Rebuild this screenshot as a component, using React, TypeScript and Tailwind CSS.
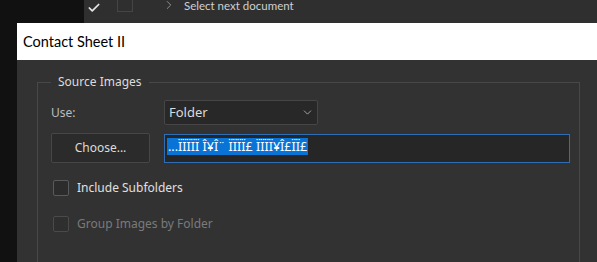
import { ChevronDown, Check, ChevronRight } from "lucide-react";

const font = { fontFamily: '"Noto Sans", "Open Sans", sans-serif' };
const narrow = { fontFamily: 'Lato, "Noto Sans", sans-serif' };

export default function App() {
  return (
    <div className="w-[597px] h-[262px] overflow-hidden bg-[#111111]" style={font}>
      {/* Actions panel behind the dialog */}
      <div className="flex h-[23px]">
        <div className="w-[84px] bg-[#111111]" />
        <div className="flex flex-1 items-start bg-[#2f2f2f]">
          <Check className="ml-[3px] mt-[1px] h-[14px] w-[14px] text-[#e6e6e6]" strokeWidth={3} />
          <div className="ml-[16px] -mt-[1px] h-[13px] w-[16px] border border-[#454545]" />
          <ChevronRight className="ml-[29px] -mt-[2px] h-[14px] w-[14px] text-[#9a9a9a]" strokeWidth={1.5} />
          <span className="ml-[8px] text-[11.5px] leading-[11px] text-[#d0d0d0]" style={narrow}>
            Select next document
          </span>
        </div>
      </div>

      <div className="flex">
        <div className="w-[17px]" />
        <div className="flex-1">
          {/* Title bar */}
          <div className="flex h-[37px] items-center bg-white pl-[6px] text-[14.5px] text-black" style={narrow}>
            Contact Sheet II
          </div>

          {/* Dialog body */}
          <div className="h-[202px] bg-[#323232] pl-[20px] pr-[17px] pt-[13px]">
            <fieldset className="h-[200px] border border-[#484848] pl-[13px] pr-[9px] pt-[9px]">
              <legend className="px-[7px] text-[12px] leading-[18px] text-[#dcdcdc]">
                Source Images
              </legend>

              <div className="flex items-center">
                <span className="w-[113px] text-[12px] text-[#bdbdbd]">Use:</span>
                <div className="flex h-[25px] w-[154px] items-center justify-between rounded-[2px] border border-[#464646] bg-[#282828] pl-[4px] pr-[3px] text-[13px] text-[#dcdcdc]">
                  Folder
                  <ChevronDown className="h-[13px] w-[13px] text-[#bdbdbd]" strokeWidth={1.5} />
                </div>
              </div>

              <div className="mt-[8px] flex items-center">
                <button className="flex h-[30px] w-[99px] items-center justify-center rounded-[2px] border border-[#474747] bg-[#2b2b2b] text-[12px] text-[#dcdcdc]">
                  Choose...
                </button>
                <div className="ml-[14px] flex h-[29px] flex-1 items-start border border-[#2f6db5] bg-[#262626] pl-[2px] pt-[3px]">
                  <span className="bg-[#0a74d6] px-[1px] text-[12.5px] leading-[17px] text-white">
                    ...ÏÏÏÏÏ Î¥Î¨ ÏÏÏÏ£ ÏÏÏÏ¥Î£ÏÏ£
                  </span>
                </div>
              </div>

              <label className="mt-[16px] flex items-center">
                <span className="ml-[2px] h-[16px] w-[16px] rounded-[2px] border border-[#5a5a5a] bg-[#2c2c2c]" />
                <span className="ml-[8px] text-[12px] text-[#e0e0e0]">Include Subfolders</span>
              </label>

              <label className="mt-[18px] flex items-center">
                <span className="ml-[2px] h-[16px] w-[16px] rounded-[2px] border border-[#4a4a4a] bg-[#2f2f2f]" />
                <span className="ml-[8px] text-[12px] text-[#7a7a7a]">Group Images by Folder</span>
              </label>
            </fieldset>
          </div>
        </div>
      </div>
    </div>
  );
}
